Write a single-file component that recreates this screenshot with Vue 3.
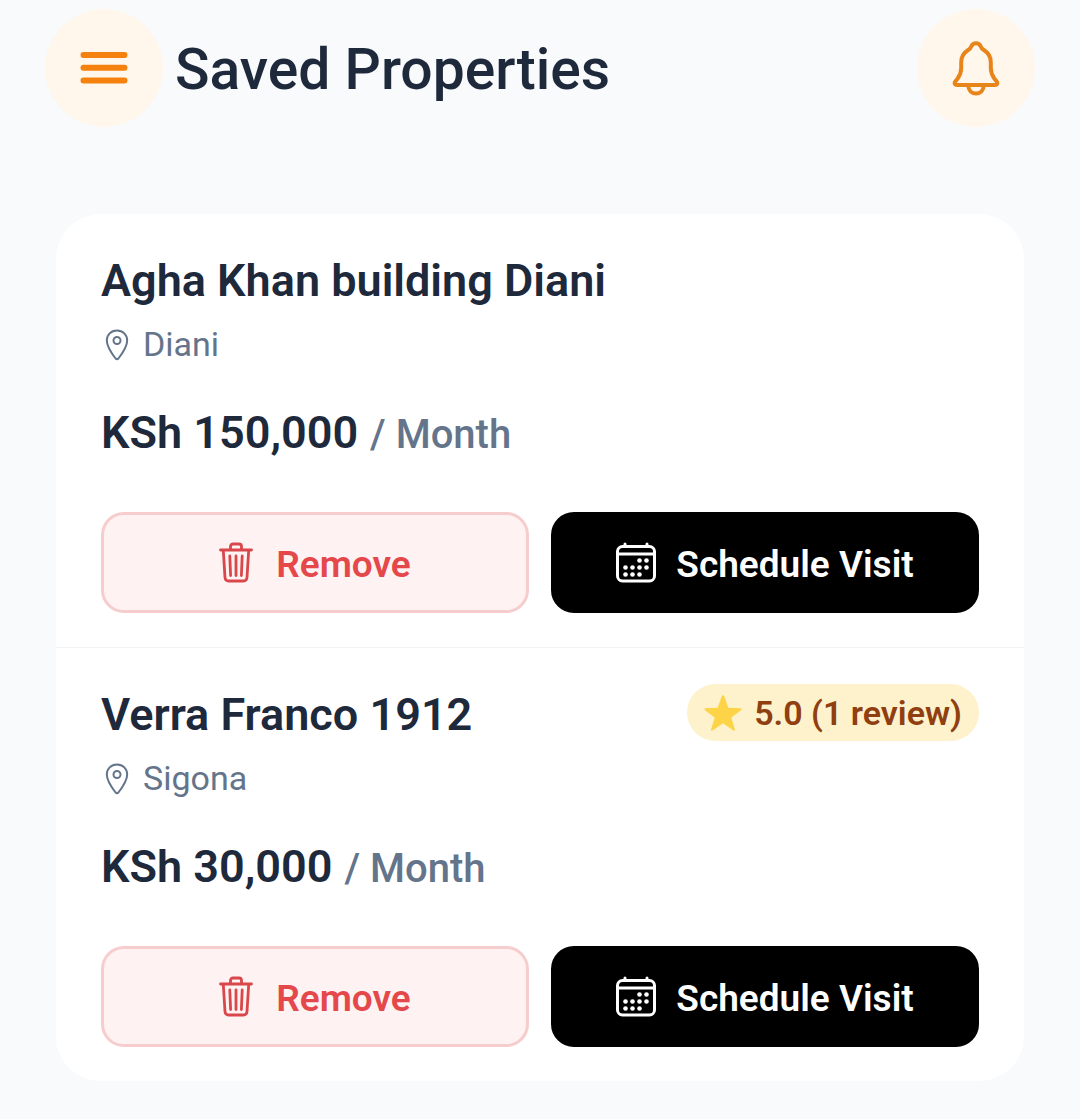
<template>
  <div class="saved-page">
    <header class="page-header">
      <button class="round-btn" type="button" aria-label="Menu">
        <svg width="48" height="34" viewBox="0 0 48 34" fill="none" stroke="#f5820f" stroke-width="6" stroke-linecap="round">
          <path d="M3.5 4h41M3.5 16.8h41M3.5 29.5h41" />
        </svg>
      </button>
      <h1>Saved Properties</h1>
      <button class="round-btn" type="button" aria-label="Notifications">
        <svg width="48" height="56" viewBox="0 0 48 56" fill="none" stroke="#e8851a" stroke-width="4" stroke-linejoin="round">
          <path d="M24 3.200c-2.500 0-4 1.300-4.700 3.200-.5 1.600-1.600 2.700-3.500 3.900-4.600 2.900-6.600 6.500-6.600 12v5.700c0 4.300-1.300 7.500-3.700 10.700l-2 2.500c-1.600 2.100-.8 3.800 1.700 3.800h37.600c2.500 0 3.300-1.700 1.700-3.800l-2-2.500c-2.400-3.200-3.700-6.400-3.700-10.700v-5.700c0-5.500-2-9.100-6.600-12-1.900-1.200-3-2.300-3.500-3.900-.7-1.900-2.200-3.200-4.700-3.200z" />
          <path d="M16.200 45.500c.2 4.800 3.400 8 7.800 8s7.600-3.200 7.800-8" />
        </svg>
      </button>
    </header>

    <main class="property-list">
      <article v-for="property in properties" :key="property.name" class="property">
        <div class="property-head">
          <h2>{{ property.name }}</h2>
          <span v-if="property.rating" class="rating-badge">
            <svg width="38" height="36" viewBox="0 0 38 36" fill="#fdd347">
              <path d="M17.700 1.200q1.300-2 2.600 0l4 11.600 12 .4q2.200.3.700 2l-9.700 7.200 3.600 12q.3 2-1.500 1L19 28.300 8.600 35.400q-1.800 1-1.500-1l3.600-12L1 15.200q-1.500-1.700.7-2l12-.4z" />
            </svg>
            {{ property.rating }}
          </span>
        </div>

        <p class="location">
          <svg width="24" height="32" viewBox="0 0 24 32" fill="none" stroke="currentColor" stroke-width="2">
            <path d="M12 1.500C6.100 1.500 1.800 5.900 1.800 11.500c0 6.400 5.200 13.300 8.800 18q1.400 1.600 2.800 0c3.600-4.700 8.800-11.600 8.800-18C22.200 5.900 17.900 1.500 12 1.500z" />
            <circle cx="12" cy="11.500" r="3.500" />
          </svg>
          {{ property.location }}
        </p>

        <p class="price">
          <strong>KSh {{ property.price }}</strong>
          <span>/ Month</span>
        </p>

        <div class="actions">
          <button class="action-btn remove" type="button">
            <svg width="34" height="44" viewBox="0 0 34 44" fill="none" stroke="#d9474a" stroke-width="2.800" stroke-linecap="round" stroke-linejoin="round">
              <path d="M1.500 8h31M11.500 7.500V4.500q0-2.500 2.500-2.500h6q2.500 0 2.500 2.500v3M4.300 8.500l1.700 27q.3 3.500 3.500 3.500h15q3.200 0 3.500-3.500l1.700-27" />
              <path d="M10.800 14l.8 19.500M17 14v19.500M23.200 14l-.8 19.500" />
            </svg>
            Remove
          </button>
          <button class="action-btn schedule" type="button">
            <svg width="40" height="44" viewBox="0 0 40 44" fill="none" stroke="#fff" stroke-width="3" stroke-linecap="round">
              <rect x="1.500" y="4.500" width="37" height="34.500" rx="5" />
              <path d="M2 12h36M9 2v2.500M31 2v2.500" />
              <g fill="#fff" stroke="none">
                <circle v-for="dot in calendarDots" :key="dot.join('-')" :cx="dot[0]" :cy="dot[1]" r="2.300" />
              </g>
            </svg>
            Schedule Visit
          </button>
        </div>
      </article>
    </main>
  </div>
</template>

<script setup>
import { ref } from 'vue'

const properties = ref([
  { name: 'Agha Khan building Diani', location: 'Diani', price: '150,000', rating: '' },
  { name: 'Verra Franco 1912', location: 'Sigona', price: '30,000', rating: '5.0 (1 review)' }
])

const calendarDots = [
  [23.5, 18.5], [30.5, 18.5],
  [9.5, 25.5], [16.5, 25.5], [23.5, 25.5], [30.5, 25.5],
  [9.5, 32.5], [16.5, 32.5], [23.5, 32.5]
]
</script>

<style>
body {
  background: #f8fafc;
}
</style>

<style scoped>
.saved-page {
  min-height: 100vh;
  box-sizing: border-box;
  background: #f8fafc;
  color: #1e293b;
  font-family: Roboto, sans-serif;
}

h1, h2, p {
  margin: 0;
}

button {
  font-family: inherit;
  cursor: pointer;
}

svg {
  flex-shrink: 0;
}

/* HEADER */
.page-header {
  display: flex;
  align-items: center;
  gap: 12px;
  padding: 9px 45px;
}

.page-header h1 {
  flex: 1;
  padding-top: 4px;
  font-size: 57px;
  font-weight: 500;
  line-height: 68px;
}

.round-btn {
  display: flex;
  align-items: center;
  justify-content: center;
  width: 118px;
  height: 118px;
  padding: 0;
  border: none;
  border-radius: 50%;
  background: #fff6ec;
}

/* PROPERTIES */
.property-list {
  margin: 78px 56px 36px;
  border-radius: 45px;
  background: #fff;
  overflow: hidden;
}

.property {
  padding: 36px 45px 34px;
}

.property + .property {
  border-top: 1px solid #f1f3f6;
}

.property-head {
  display: flex;
  justify-content: space-between;
  align-items: flex-start;
}

.property-head h2 {
  font-size: 45px;
  font-weight: 600;
  line-height: 62px;
}

.rating-badge {
  display: flex;
  align-items: center;
  gap: 12px;
  height: 57px;
  padding: 0 17px;
  border-radius: 29px;
  box-sizing: border-box;
  background: #fef2cd;
  color: #8f3f10;
  font-size: 34px;
  font-weight: 600;
  white-space: nowrap;
}

.location {
  display: flex;
  align-items: center;
  gap: 14px;
  margin-top: 10px;
  padding-left: 4px;
  color: #64748b;
  font-size: 34px;
  line-height: 45px;
}

.price {
  display: flex;
  align-items: baseline;
  gap: 12px;
  margin-top: 36px;
  line-height: 60px;
}

.price strong {
  font-size: 45px;
  font-weight: 600;
}

.price span {
  color: #64748b;
  font-size: 40px;
  font-weight: 500;
}

.actions {
  display: grid;
  grid-template-columns: 1fr 1fr;
  gap: 22px;
  margin-top: 47px;
}

.action-btn {
  display: flex;
  align-items: center;
  justify-content: center;
  height: 101px;
  padding: 3px 0 0;
  border: 3px solid #000;
  border-radius: 23px;
  font-size: 37px;
  font-weight: 600;
}

.remove {
  gap: 23px;
  background: #fef2f2;
  border-color: #f7cccd;
  color: #e5484a;
}

.schedule {
  gap: 20px;
  background: #000;
  color: #fff;
}
</style>
